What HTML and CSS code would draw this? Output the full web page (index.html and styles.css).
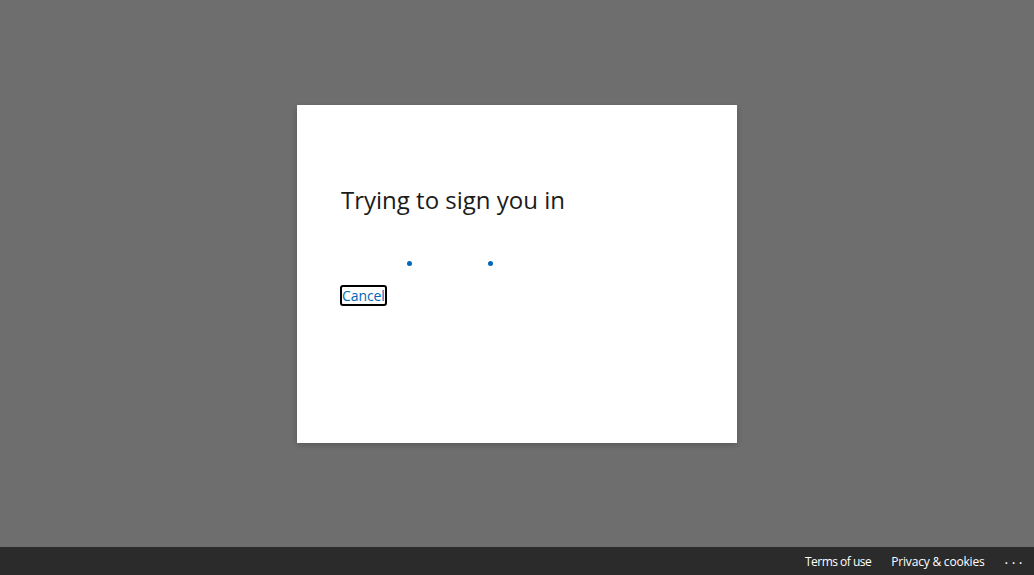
FILE: index.html
```html
<!DOCTYPE html>
<html lang="en">
<head>
<meta charset="utf-8">
<title>Sign in</title>
<link rel="stylesheet" href="styles.css">
</head>
<body>
<div class="page">
  <main class="stage">
    <div class="card">
      <h1 class="title">Trying to sign you in</h1>
      <div class="progress">
        <span class="dot dot-a"></span>
        <span class="dot dot-b"></span>
      </div>
      <div class="actions">
        <a class="cancel" href="#">Cancel</a>
      </div>
    </div>
  </main>
  <footer class="footer">
    <a class="foot-link foot-terms" href="#">Terms of use</a>
    <a class="foot-link" href="#">Privacy &amp; cookies</a>
    <span class="more">...</span>
  </footer>
</div>
</body>
</html>
```
FILE: styles.css
```css
* { box-sizing: border-box; }
html, body { margin: 0; padding: 0; height: 100%; }
body {
  background: #6e6e6e;
  font-family: "Open Sans", "Noto Sans", sans-serif;
}
.page {
  display: flex;
  flex-direction: column;
  height: 575px;
}
.stage {
  flex: 1;
  display: flex;
  justify-content: center;
  align-items: flex-start;
  padding-top: 105px;
}
.card {
  width: 440px;
  height: 338px;
  background: #fff;
  box-shadow: 0 2px 6px rgba(0,0,0,0.2);
  padding: 77px 44px 0 44px;
}
.title {
  margin: 0;
  font-size: 24px;
  font-weight: 400;
  line-height: 36px;
  color: #1b1b1b;
  letter-spacing: 0;
}
.progress {
  position: relative;
  height: 16px;
  margin-top: 37px;
}
.dot {
  position: absolute;
  top: 6px;
  width: 5px;
  height: 5px;
  border-radius: 50%;
  background: #0067b8;
}
.dot-a { left: 66px; }
.dot-b { left: 147px; }
.actions {
  margin-top: 13px;
}
.cancel {
  display: inline-block;
  color: #0067b8;
  font-size: 14px;
  line-height: 17px;
  text-decoration: none;
  border: 2px solid #000;
  border-radius: 3px;
  margin-left: -1px;
  letter-spacing: -0.1px;
}
.footer {
  height: 28px;
  background: #2b2b2b;
  display: flex;
  justify-content: flex-end;
  align-items: center;
  padding-right: 8px;
}
.foot-link {
  color: #fff;
  font-size: 12px;
  text-decoration: none;
  margin-right: 20px;
  letter-spacing: -0.2px;
}
.foot-terms { letter-spacing: -0.5px; }
.more {
  color: #fff;
  font-size: 14px;
  letter-spacing: 3.5px;
  line-height: 1;
  margin-top: -4px;
}
```
